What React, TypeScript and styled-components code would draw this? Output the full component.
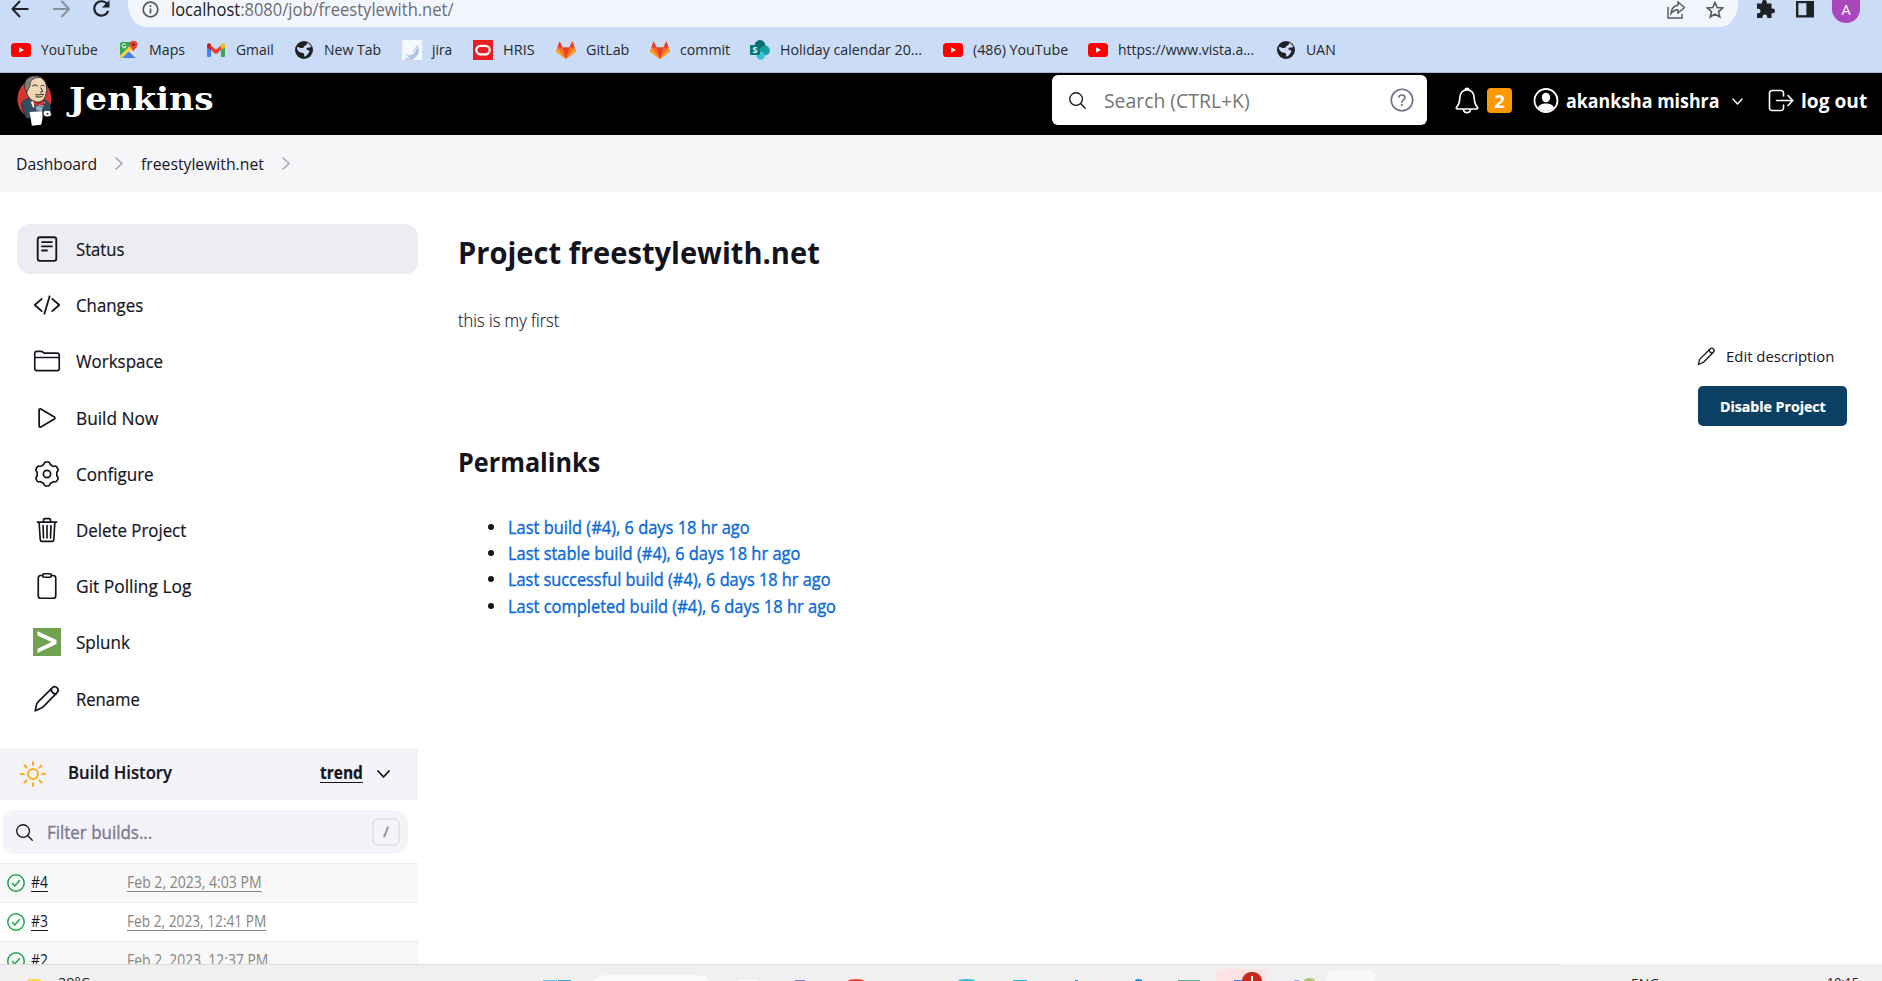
import React, { useLayoutEffect, useRef, useState } from 'react';
import styled, { createGlobalStyle } from 'styled-components';

const Global = createGlobalStyle`
  * { box-sizing: border-box; }
  html, body { margin: 0; padding: 0; overflow: hidden; }
  body { font-family: "Open Sans", "Noto Sans", sans-serif; color: #14141f; background: #fff; }
  svg { display: block; flex: none; }
  h1, h2, p, ul { margin: 0; padding: 0; }
`;

/* Text condensed or widened to fill a known width */
const FitBox = styled.span<{ $w: number }>`
  display: block; flex: none; width: ${p => p.$w}px; white-space: nowrap; line-height: inherit;
`;
const FitInner = styled.span<{ $u?: boolean }>`
  display: inline-block; transform-origin: 0 50%; white-space: pre; vertical-align: top;
  ${p => p.$u && 'text-decoration: underline 1px; text-underline-offset: 3px; text-decoration-skip-ink: auto;'}
`;
function Fit({ w, u, children }: { w: number; u?: boolean; children: React.ReactNode }) {
  const ref = useRef<HTMLSpanElement>(null);
  const [k, setK] = useState(1);
  useLayoutEffect(() => {
    if (ref.current) setK(w / ref.current.offsetWidth);
  }, [w]);
  return (
    <FitBox $w={w}><FitInner ref={ref} $u={u} style={{ transform: `scaleX(${k})` }}>{children}</FitInner></FitBox>
  );
}

/* ---------- layout ---------- */
const Page = styled.div`
  width: 1882px; height: 981px; display: flex; flex-direction: column; overflow: hidden; background: #fff;
`;
const Chrome = styled.div`
  flex: none; height: 73px; background: #cbdcf7; border-bottom: 1px solid #a9b8d3;
`;
const NavRow = styled.div`
  height: 27px; display: flex; align-items: flex-start; padding-left: 10px;
`;
const NavIcon = styled.div<{ $w: number; $mt?: number }>`
  width: ${p => p.$w}px; flex: none; margin-top: ${p => p.$mt ?? 0}px;
`;
const Address = styled.div`
  width: 1610px; height: 27px; background: #f3f7fd; border-radius: 0 0 18px 18px / 0 0 24px 24px;
  display: flex; align-items: flex-start; padding-left: 14px; font-size: 17.5px; line-height: 18px; color: #6a6e73;
  b { font-weight: 400; color: #202124; }
`;
const AddressText = styled.div`margin-left: 12px; width: 1495px; flex: none;`;
const Avatar = styled.div`
  width: 28px; height: 23px; border-radius: 0 0 14px 14px; background: #ab47bc; color: #fff;
  font-size: 14.5px; line-height: 19px; text-align: center;
`;
const Bookmarks = styled.div`
  height: 45px; padding: 0 0 0 11px; display: flex; align-items: center; font-size: 15px; color: #25282d;
`;
const Bookmark = styled.div<{ $w: number }>`
  width: ${p => p.$w}px; flex: none; display: flex; align-items: center; gap: 9.5px; line-height: 20px;
  & > span { padding-bottom: 2px; }
`;
const Header = styled.header`
  flex: none; height: 62px; background: #000; display: flex; align-items: flex-start; color: #fff;
  padding-left: 16px; font-weight: 700; font-size: 20px;
`;
const Brand = styled.div`
  width: 1036px; flex: none; display: flex; align-items: flex-start; gap: 16px; padding-top: 2px;
  font-family: "DejaVu Serif", "Liberation Serif", serif; font-size: 32.5px; line-height: 48px;
`;
const Search = styled.div`
  width: 375px; height: 50px; margin-top: 2px; background: #fff; border-radius: 6px; display: flex; align-items: center;
  padding: 0 13px 0 17px; color: #757575; font-weight: 400; font-size: 19.5px;
`;
const SearchText = styled.div`width: 284px; margin-left: 18px; flex: none;`;
const HeaderTools = styled.div`
  height: 56px; padding-left: 28px; display: flex; align-items: center; line-height: 28px;
`;
const Badge = styled.div`
  width: 25px; height: 25px; background: #ff9800; border-radius: 4px; text-align: center; line-height: 25px;
  margin: 0 21px 2px 8px; font-size: 18.5px;
`;
const Gap = styled.div<{ $w: number }>`width: ${p => p.$w}px; flex: none;`;
const Crumbs = styled.nav`
  flex: none; height: 57px; background: #f6f6f9; display: flex; align-items: center; padding-left: 16px;
  font-size: 16.5px; gap: 18px; color: #14141f;
`;
const Body = styled.div`flex: 1; min-height: 0; display: flex; overflow: hidden;`;
const Side = styled.aside`width: 418px; flex: none;`;
const Tasks = styled.div`
  padding: 32px 0 0 17px; display: flex; flex-direction: column; gap: 6.2px; height: 556px;
`;
const Task = styled.div<{ $active?: boolean }>`
  height: 50px; flex: none; border-radius: 13px; display: flex; align-items: center; padding-left: 16px; gap: 15px;
  background: ${p => (p.$active ? '#ecedf3' : 'transparent')}; font-size: 17.7px; -webkit-text-stroke: 0.2px;
`;
const HistoryHead = styled.div`
  height: 52px; background: #f3f3f8; display: flex; align-items: center; padding: 0 28px 4px 20px;
  font-weight: 600; font-size: 18px; -webkit-text-stroke: 0.2px;
`;
const SunSlot = styled.div`margin: 4px 22px 0 0;`;
const Trend = styled.div`margin: 0 14px 0 auto; font-weight: 700;`;
const ChevronSlot = styled.div`margin-top: 3px;`;
const Filter = styled.div`
  width: 405px; height: 44px; margin: 10px 0 9px 3px; background: #f3f3f8; border-radius: 13px;
  display: flex; align-items: center; padding: 0 8px 0 13px; color: #7b7994; font-size: 17.5px; gap: 14px;
  -webkit-text-stroke: 0.35px;
`;
const KeyBox = styled.div`
  width: 28px; height: 28px; margin-left: auto; border: 2px solid #e3e2ee; border-radius: 6px; text-align: center;
  font-size: 15px; line-height: 23px;
`;
const Build = styled.div<{ $odd?: boolean }>`
  height: 39px; border-top: 1px solid #eeeeef; background: ${p => (p.$odd ? '#f8f8f8' : '#fff')};
  display: flex; align-items: center; padding: 0 0 3px 7px; font-size: 15.5px;
`;
const BuildNo = styled.div`width: 96px; margin-left: 6px;`;
const BuildDate = styled.div`color: #858585;`;
const CheckSlot = styled.div`margin-top: 3px;`;
const Main = styled.main`flex: 1; padding: 40px 35px 0 40px;`;
const Title = styled.h1`font-size: 31px; line-height: 40px; font-weight: 700;`;
const Desc = styled.p`margin-top: 36px; font-size: 17.7px; line-height: 24px; font-weight: 300; -webkit-text-stroke: 0.15px;`;
const Actions = styled.div`
  margin-top: 11px; height: 83px; display: flex; flex-direction: column; align-items: flex-end;
`;
const Edit = styled.div`
  width: 150px; height: 26px; display: flex; align-items: center; gap: 10px; font-size: 15.2px; margin-bottom: 17px;
`;
const Button = styled.button`
  width: 149px; height: 40px; border: 0; border-radius: 5px; background: #0b4063; color: #fff; padding: 0 0 0 22px;
  font: 700 14.8px "Open Sans", "Noto Sans", sans-serif; text-align: left; -webkit-text-stroke: 0.2px;
`;
const SubTitle = styled.h2`margin-top: 16px; font-size: 27.5px; line-height: 40px; font-weight: 700;`;
const Links = styled.ul`list-style: none; margin-top: 31.500px; padding-left: 30px;`;
const Link = styled.li`
  height: 26.4px; display: flex; align-items: center; gap: 14px; color: #0b6bd6; font-size: 17.5px; line-height: 24px;
  -webkit-text-stroke: 0.4px;
  &::before { content: ''; width: 6px; height: 6px; border-radius: 50%; background: #14141f; flex: none; }
`;
const Taskbar = styled.footer`
  flex: none; height: 17px; background: #f0f0f0; display: flex; align-items: flex-end; overflow: hidden;
  border-top: 1px solid; border-image: linear-gradient(90deg, #dcdcdc 1558px, #f0f0f0 1558px) 1;
`;
const Slice = styled.div<{ $ml: number; $w: number; $h: number; $c: string; $r?: string }>`
  flex: none; margin-left: ${p => p.$ml}px; width: ${p => p.$w}px; height: ${p => p.$h}px; background: ${p => p.$c};
  border-radius: ${p => p.$r ?? '0'};
`;
const BarText = styled.div<{ $ml: number; $peek: number }>`
  flex: none; margin-left: ${p => p.$ml}px; height: ${p => p.$peek}px; overflow: visible; font-size: 14.5px; line-height: 12px; color: #222;
`;
const AlertTile = styled.div`
  flex: none; margin-left: 16px; width: 51px; height: 12px; background: #fde3e3; border-radius: 6px 6px 0 0;
  display: flex; align-items: flex-end; padding-left: 18px;
`;
const AlertDot = styled.div`
  width: 20px; height: 9px; border-radius: 10px 10px 0 0; background: #c42b1c; display: flex; justify-content: center; align-items: flex-end;
  &::after { content: ''; width: 2px; height: 5px; background: #fff; }
`;

/* ---------- icons ---------- */
type IconProps = { s: number; sw?: number; c?: string; children: React.ReactNode };
const Line = ({ s, sw = 32, c = 'currentColor', children }: IconProps) => (
  <svg width={s} height={s} viewBox="0 0 512 512" fill="none" stroke={c} strokeWidth={sw} strokeLinecap="round" strokeLinejoin="round">{children}</svg>
);
const Chevron = ({ w, h, c, sw = 1.6 }: { w: number; h: number; c: string; sw?: number }) => (
  <svg width={w} height={h} viewBox={`0 0 ${w} ${h}`} fill="none" stroke={c} strokeWidth={sw} strokeLinecap="round" strokeLinejoin="round">
    {w > h ? <path d={`M1 1L${w / 2} ${h - 1}L${w - 1} 1`} /> : <path d={`M1 1L${w - 1} ${h / 2}L1 ${h - 1}`} />}
  </svg>
);
const Magnifier = ({ s, sw }: { s: number; sw?: number }) => (
  <svg width={s} height={s} viewBox="46 46 420 420" fill="none" stroke="#14141f" strokeWidth={sw ?? 34} strokeLinecap="round">
    <circle cx="221" cy="221" r="157" /><path d="M338 338L448 448" />
  </svg>
);
const gearPath = (() => {
  const pts: string[] = [];
  for (let i = 0; i < 120; i++) {
    const a = (i / 120) * Math.PI * 2;
    const r = 200 + 20 * Math.tanh(2.4 * Math.cos(6 * a));
    pts.push(`${(256 + r * Math.sin(a)).toFixed(1)} ${(256 - r * Math.cos(a)).toFixed(1)}`);
  }
  return `M${pts.join('L')}Z`;
})();
const Pencil = ({ s, sw = 32 }: { s: number; sw?: number }) => (
  <Line s={s} sw={sw}>
    <path d="M40 472l24-112c4-18 12-32 26-46L352 52c30-30 66-26 90 0s26 60-2 88L190 396c-14 14-28 22-46 28z" />
    <path d="M324 80c16 48 44 78 92 92" />
  </Line>
);
const icons: Record<string, React.ReactNode> = {
  Status: <Line s={28} sw={34}><rect x="86" y="42" width="340" height="430" rx="42" /><path d="M166 130h180M166 208h180M166 284h90" /></Line>,
  Changes: <Line s={28} sw={33}><path d="M160 368L32 256l128-112M352 368l128-112-128-112M304 96l-96 320" /></Line>,
  Workspace: <Line s={28} sw={30}><path d="M440 432H72a40 40 0 01-40-40V120a40 40 0 0140-40h75.89a40 40 0 0122.19 6.72l27.84 18.56a40 40 0 0022.19 6.72H440a40 40 0 0140 40v240a40 40 0 01-40 40zM32 192h448" /></Line>,
  'Build Now': <Line s={28} sw={32}><path d="M112 111v290c0 17.44 17 28.52 31 20.16l247.9-148.37c12.12-7.25 12.12-26.33 0-33.58L143 90.84c-14-8.36-31 2.72-31 20.16z" /></Line>,
  Configure: <Line s={28} sw={31}><path d={gearPath} /><circle cx="256" cy="256" r="66" /></Line>,
  'Delete Project': <Line s={28} sw={30}><path d="M112 112l20 320c.95 18.49 14.4 32 32 32h184c17.67 0 30.87-13.51 32-32l20-320M80 112h352M192 112V72a24 24 0 0124-24h80a24 24 0 0124 24v40M256 176v224M184 176l8 224M328 176l-8 224" /></Line>,
  'Git Polling Log': <Line s={28} sw={31}><path d="M336 64h32a48 48 0 0148 48v320a48 48 0 01-48 48H144a48 48 0 01-48-48V112a48 48 0 0148-48h32" /><rect x="176" y="32" width="160" height="64" rx="26" /></Line>,
  Splunk: <svg width="28" height="28" viewBox="0 0 28 28"><rect width="28" height="28" fill="#70a24f" /><path d="M4.5 3.2L23.5 12v4L4.5 25v-4.300L18.500 14 4.500 7.500z" fill="#fff" /></svg>,
  Rename: <Pencil s={28} sw={31} />,
};
const YouTube = () => <svg width="20" height="20" viewBox="0 0 20 20"><rect y="3" width="20" height="14" rx="3.600" fill="#f00" /><path d="M8 7.200v5.600l5-2.800z" fill="#fff" /></svg>;
const Globe = () => (
  <svg width="20" height="20" viewBox="0 0 20 20"><circle cx="10" cy="10" r="9" fill="#202124" />
    <path d="M3 7c2 .3 3.500 1.200 5.500 1 2-.2 1-2 3-2.400 1.500-.3 1-2 2-2.600 2 1 3 2 3.800 4-1.800 1-3.800-.2-4.800 1.400-.8 1.600 1.500 1.200 2.500 2 1 1-.5 3-1.500 4-1 1-1.500 1.500-3 2.400-1-1 .5-2.500-1-3.500-1.500-.8-4-.5-5-2C3.600 10.500 2.800 9 3 7z" fill="#cbdcf7" /></svg>
);
const Fox = () => (
  <svg width="20" height="20" viewBox="0 0 20 20">
    <path d="M3.600 1.200L.3 10.500a1.500 1.500 0 00.5 1.800L10 19l9.200-6.700a1.500 1.500 0 00.5-1.800L16.400 1.200 13.300 7.500H6.700z" fill="#fc6d26" />
    <path d="M10 19L6.500 7.500h7z" fill="#e24329" /><path d="M3.600 1.200L6.700 7.500H1.400zM16.400 1.200l-3.100 6.300h5.300z" fill="#e24329" />
    <path d="M1.400 8L.3 10.500a1.500 1.500 0 00.5 1.800L10 19zM18.600 8l1.100 2.500a1.500 1.500 0 01-.5 1.800L10 19z" fill="#fca326" />
  </svg>
);
const Maps = () => (
  <svg width="20" height="20" viewBox="0 0 20 20"><rect x="1" y="2" width="16" height="16" rx="2" fill="#34a853" />
    <path d="M1.500 17.500L17 3v13a2 2 0 01-2 2H3z" fill="#dfe3e6" /><path d="M1 15.500L14.500 2.600 17 5 3.500 18H3a2 2 0 01-2-2z" fill="#fbd13c" />
    <path d="M3 18l7-6.500 6.500 6.500z" fill="#4285f4" />
    <path d="M14.300 12c-.4-2.800-3.700-4-3.700-7.300a3.900 3.900 0 017.800 0c0 3.300-3.700 4.500-4.100 7.300z" fill="#ea4335" /><circle cx="14.500" cy="4.500" r="1.500" fill="#8c2018" />
    <path d="M6.800 4.700A2 2 0 107 6.500H5.300" stroke="#fff" fill="none" /></svg>
);
const Gmail = () => (
  <svg width="20" height="20" viewBox="0 0 20 20"><path d="M1 5h4v12H2.300A1.300 1.300 0 011 15.700z" fill="#4285f4" /><path d="M15 5h4v10.700a1.300 1.300 0 01-1.300 1.300H15z" fill="#34a853" />
    <path d="M5 5.500l5 4 5-4v4.800l-5 3.900-5-3.900z" fill="#ea4335" /><path d="M1 5.200C1 3.200 3 2.600 4.400 3.700L5 4.200v6.100L1 7.300z" fill="#c5221f" /><path d="M19 5.200c0-2-2-2.600-3.400-1.500l-.6.5v6.100l4-3z" fill="#fbbc04" /></svg>
);
const Jira = () => (
  <svg width="20" height="20" viewBox="0 0 20 20"><rect width="20" height="20" fill="#f3f9fe" />
    <path d="M3 13c3 3 7 3 10-1l3-7c2 5 1 10-3 13-4 1-8-1-10-5z" fill="#bcd8f0" /><path d="M6 16c5 1 8-2 9-7M8 18c5 0 7-3 8-8M11 12l4-6" stroke="#86add9" strokeWidth=".8" fill="none" /><path d="M3 19h9" stroke="#b795d8" /></svg>
);
const Hris = () => <svg width="20" height="20" viewBox="0 0 20 20"><rect width="20" height="20" fill="#ed1c24" /><rect x="3.300" y="5.800" width="13.400" height="8.600" rx="4.300" fill="none" stroke="#fff" strokeWidth="2.200" /></svg>;
const SharePoint = () => (
  <svg width="20" height="20" viewBox="0 0 20 20"><circle cx="10" cy="5.500" r="5.400" fill="#036c70" /><circle cx="14.800" cy="10.500" r="5" fill="#1a9ba1" /><circle cx="10.600" cy="15.800" r="4" fill="#37c6d0" />
    <rect y="5" width="10" height="10" rx="1" fill="#03787c" /><text x="5" y="13" fontSize="9" fontWeight="700" textAnchor="middle" fill="#fff" fontFamily="Open Sans, sans-serif">S</text></svg>
);
const Butler = () => (
  <svg width="37" height="51" viewBox="50 43 110 153">
    <ellipse cx="105" cy="115" rx="51" ry="58" fill="#d33833" />
    <path d="M66 126c8-8 14-10 22-13l50 6c12 6 17 18 15 32l-10 16-62 6c-8-16-14-32-15-47z" fill="#335061" stroke="#14222b" strokeWidth="2" />
    <path d="M78 84c-6-20 2-34 22-37 22-3 40 10 41 32 1 20-4 42-22 45-22 2-36-14-41-40z" fill="#f0d6b7" stroke="#2a2420" strokeWidth="2.500" />
    <path d="M76 84c-3-20 4-34 26-38 10-1 18 1 24 4-12 0-26 2-32 12-3 6 0 14-6 20-2 6-4 6-5 12z" fill="#817e78" stroke="#25211f" strokeWidth="2" />
    <path d="M99 76c5-5 11-4 15 0M124 76c4-3 7-3 10 0M124 82l6 10-7 3M108 102c8 4 18-4 24-1M110 108c8 3 15 1 19-2" fill="none" stroke="#2a2420" strokeWidth="3" strokeLinecap="round" />
    <path d="M94 124l10-4 12 12 14-12 6 4-6 18-30-2z" fill="#fff" />
    <path d="M103 120l14 8 15-9 2 16-15-5-14 8z" fill="#d33833" stroke="#7c1512" strokeWidth="2" />
    <path d="M106 138l14-4 12 6-5 14-17-4z" fill="#8fb0c4" stroke="#14222b" strokeWidth="2" />
    <path d="M90 154l38-2 1 22-4 18-28 3-3-20z" fill="#fff" />
    <path d="M131 153c8-6 16-4 22-2l3 14-14 4-10-5z" fill="#fff" stroke="#1b2b35" strokeWidth="2.500" /><circle cx="144" cy="159" r="3" fill="#1b2b35" />
  </svg>
);
const Sun = () => (
  <svg width="26" height="26" viewBox="0 0 26 26" fill="none" stroke="#fea81a" strokeWidth="2" strokeLinecap="round">
    <circle cx="13" cy="13" r="5" />
    {[0, 45, 90, 135, 180, 225, 270, 315].map(a => <path key={a} d="M13 1v2.800" transform={`rotate(${a} 13 13)`} />)}
  </svg>
);
const Check = () => (
  <svg width="18" height="18" viewBox="0 0 18 18" fill="none" stroke="#1ea64b" strokeWidth="1.500" strokeLinecap="round" strokeLinejoin="round">
    <circle cx="9" cy="9" r="8.200" /><path d="M5.500 9.500l2.300 2.500 4.700-5.500" /></svg>
);

/* ---------- data ---------- */
const bookmarks: [React.ReactNode, string, number, number][] = [
  [<YouTube />, 'YouTube', 57, 108], [<Maps />, 'Maps', 36, 87], [<Gmail />, 'Gmail', 38, 88], [<Globe />, 'New Tab', 57, 108],
  [<Jira />, 'jira', 20, 71], [<Hris />, 'HRIS', 32, 83], [<Fox />, 'GitLab', 43, 94], [<Fox />, 'commit', 50, 100],
  [<SharePoint />, 'Holiday calendar 20...', 142, 193], [<YouTube />, '(486) YouTube', 95, 145],
  [<YouTube />, 'https://www.vista.a...', 136, 188], [<Globe />, 'UAN', 30, 80],
];
const tasks: [string, number][] = [
  ['Status', 48], ['Changes', 67.5], ['Workspace', 87], ['Build Now', 82], ['Configure', 78],
  ['Delete Project', 110.5], ['Git Polling Log', 115], ['Splunk', 54], ['Rename', 64],
];
const builds: [string, string, number][] = [
  ['#4', 'Feb 2, 2023, 4:03 PM', 135], ['#3', 'Feb 2, 2023, 12:41 PM', 139], ['#2', 'Feb 2, 2023, 12:37 PM', 141],
];
const links: [string, number][] = [
  ['Last build (#4), 6 days 18 hr ago', 242], ['Last stable build (#4), 6 days 18 hr ago', 292],
  ['Last successful build (#4), 6 days 18 hr ago', 323], ['Last completed build (#4), 6 days 18 hr ago', 328],
];

export default function App() {
  return (
    <Page>
      <Global />
      <Chrome>
        <NavRow>
          <NavIcon $w={42}><svg width="20" height="18" viewBox="0 0 20 18" fill="none" stroke="#202124" strokeWidth="2"><path d="M18.500 9H3M10 1L2.500 9l7.500 8" /></svg></NavIcon>
          <NavIcon $w={40}><svg width="20" height="18" viewBox="0 0 20 18" fill="none" stroke="#8b919b" strokeWidth="2"><path d="M1 9h15.500M9.500 1L17 9l-7.500 8" /></svg></NavIcon>
          <NavIcon $w={36}><svg width="19" height="18" viewBox="0 0 19 18"><path d="M15.500 4.500A7.200 7.200 0 1016.200 11" fill="none" stroke="#202124" strokeWidth="2.200" /><path d="M17.500 0v7.500H10z" fill="#202124" /></svg></NavIcon>
          <Address>
            <NavIcon $w={17} $mt={1}><svg width="17" height="17" viewBox="0 0 17 17" fill="none" stroke="#54585d" strokeWidth="1.700"><circle cx="8.500" cy="8.500" r="7.300" /><path d="M8.500 7.500v5M8.500 4.200v1.900" /></svg></NavIcon>
            <AddressText><Fit w={282}><b>localhost</b>:8080/job/freestylewith.net/</Fit></AddressText>
            <NavIcon $w={40}><svg width="20" height="19" viewBox="0 0 20 19" fill="none" stroke="#54585d" strokeWidth="1.400"><path d="M2 7v11h14v-4M12 2l6.500 5.500L12 13V9.700c-3 0-5 1-7 3.800.5-5 3-8 7-8.300z" /></svg></NavIcon>
            <NavIcon $w={20} $mt={1}><svg width="18" height="18" viewBox="0 0 18 18" fill="none" stroke="#54585d" strokeWidth="1.600"><path d="M9 1.500l2.200 5 5.500.5-4.200 3.600 1.300 5.400L9 13.100 4.200 16l1.300-5.400L1.300 7l5.500-.5z" /></svg></NavIcon>
          </Address>
          <Gap $w={18} />
          <NavIcon $w={40}><svg width="20" height="18" viewBox="0 0 20 18"><path d="M1 3.500h5V2.300a2.400 2.400 0 014.800 0v1.200h4.700v5h1.100a2.400 2.400 0 010 4.800h-1.100V18h-4.300v-1.200a2.300 2.300 0 00-4.600 0V18H1v-4.700h1.200a2.300 2.300 0 000-4.600H1z" fill="#202124" /></svg></NavIcon>
          <NavIcon $w={36}><svg width="18" height="18" viewBox="0 0 18 18"><path d="M0 1h18v16.500H0z" fill="#202124" /><path d="M2.400 3.200h8v12h-8z" fill="#cbdcf7" /></svg></NavIcon>
          <Avatar>A</Avatar>
        </NavRow>
        <Bookmarks>
          {bookmarks.map(([icon, text, w, total], i) => <Bookmark key={i} $w={total}>{icon}<Fit w={w}>{text}</Fit></Bookmark>)}
        </Bookmarks>
      </Chrome>

      <Header>
        <Brand><Butler /><Fit w={144}>Jenkins</Fit></Brand>
        <Search>
          <Magnifier s={17} sw={32} />
          <SearchText><Fit w={146}>Search (CTRL+K)</Fit></SearchText>
          <Line s={28} sw={30} c="#73718c">
            <circle cx="256" cy="256" r="196" />
            <path d="M200 202c2-20 22-38 56-38 32 0 54 18 56 42 1 20-9 31-27 43s-31 26-31 47" /><circle cx="254" cy="346" r="6" />
          </Line>
        </Search>
        <HeaderTools>
          <svg width="24" height="28" viewBox="0 0 24 28" fill="none" stroke="#fff" strokeWidth="1.700" strokeLinejoin="round"><path d="M12 3c-5 0-7 4-7.200 8-.2 5-.8 6.500-3.200 9.200-.7.900-.2 1.800.9 1.800h19c1.100 0 1.600-.9.900-1.800-2.400-2.700-3-4.200-3.200-9.200C19 7 17 3 12 3zM10 2.800c.3-2 3.700-2 4 0M8.500 22c0 4.800 7 4.800 7 0" /></svg>
          <Badge>2</Badge>
          <svg width="26" height="26" viewBox="0 0 26 26"><circle cx="13" cy="12.500" r="11.500" fill="none" stroke="#fff" strokeWidth="1.800" /><ellipse cx="13" cy="9.500" rx="4.200" ry="4.800" fill="#fff" /><path d="M5 19.500c2-5.500 14-5.500 16 0-4 4.500-12 4.500-16 0z" fill="#fff" /></svg>
          <Gap $w={7} /><Fit w={153}>akanksha mishra</Fit>
          <Gap $w={13} /><Chevron w={11} h={7} c="#fff" sw={1.4} />
          <Gap $w={25} />
          <svg width="26" height="24" viewBox="0 0 26 24" fill="none" stroke="#fff" strokeWidth="1.600" strokeLinecap="round" strokeLinejoin="round"><path d="M15.500 7V4a2.500 2.500 0 00-2.500-2.500H4A2.500 2.500 0 001.500 4v15A2.500 2.500 0 004 21.500h9a2.500 2.500 0 002.500-2.500v-3M8.500 11.500h16M20 6.500l4.800 5-4.800 5" /></svg>
          <Gap $w={7} /><Fit w={66}>log out</Fit>
        </HeaderTools>
      </Header>

      <Crumbs>
        <Fit w={81}>Dashboard</Fit><Chevron w={8} h={13} c="#a5a3b8" />
        <Fit w={123}>freestylewith.net</Fit><Chevron w={8} h={13} c="#a5a3b8" />
      </Crumbs>

      <Body>
        <Side>
          <Tasks>
            {tasks.map(([t, w], i) => <Task key={t} $active={i === 0}>{icons[t]}<Fit w={w}>{t}</Fit></Task>)}
          </Tasks>
          <HistoryHead>
            <SunSlot><Sun /></SunSlot><Fit w={104}>Build History</Fit>
            <Trend><Fit w={43} u>trend</Fit></Trend><ChevronSlot><Chevron w={13} h={8} c="#14141f" sw={1.8} /></ChevronSlot>
          </HistoryHead>
          <Filter><Magnifier s={17} sw={32} /><Fit w={105.5}>Filter builds...</Fit><KeyBox>/</KeyBox></Filter>
          {builds.map(([n, d, w], i) => (
            <Build key={n} $odd={i % 2 === 0}>
              <CheckSlot><Check /></CheckSlot>
              <BuildNo><Fit w={17} u>{n}</Fit></BuildNo>
              <BuildDate><Fit w={w} u>{d}</Fit></BuildDate>
            </Build>
          ))}
        </Side>
        <Main>
          <Title><Fit w={362}>Project freestylewith.net</Fit></Title>
          <Desc><Fit w={101.5}>this is my first</Fit></Desc>
          <Actions>
            <Edit><Pencil s={19} sw={36} /><Fit w={108}>Edit description</Fit></Edit>
            <Button><Fit w={106}>Disable Project</Fit></Button>
          </Actions>
          <SubTitle><Fit w={142}>Permalinks</Fit></SubTitle>
          <Links>{links.map(([t, w]) => <Link key={t}><Fit w={w}>{t}</Fit></Link>)}</Links>
        </Main>
      </Body>

      <Taskbar>
        <Slice $ml={27} $w={14} $h={2} $c="#fdd835" $r="7px 7px 0 0 / 2px 2px 0 0" />
        <BarText $ml={17} $peek={4}><Fit w={32}>29°C</Fit></BarText>
        <Slice $ml={453} $w={14} $h={1} $c="#6cc9f2" />
        <Slice $ml={1} $w={13} $h={1} $c="#3fa4e4" />
        <Slice $ml={23} $w={115} $h={6} $c="#fbfbfb" $r="14px 14px 0 0 / 6px 6px 0 0" />
        <Slice $ml={29} $w={20} $h={1} $c="#fafafa" />
        <Slice $ml={37} $w={10} $h={1} $c="#8a7fce" />
        <Slice $ml={43} $w={16} $h={2} $c="#ea4335" $r="8px 8px 0 0 / 2px 2px 0 0" />
        <Slice $ml={94} $w={17} $h={2} $c="#2bc4d0" $r="8px 8px 0 0 / 2px 2px 0 0" />
        <Slice $ml={38} $w={14} $h={1} $c="#22b8f0" />
        <Slice $ml={48} $w={3} $h={1} $c="#2a86d8" />
        <Slice $ml={57} $w={7} $h={2} $c="#1c8fdc" $r="4px 4px 0 0 / 2px 2px 0 0" />
        <Slice $ml={36} $w={22} $h={1} $c="#5cb896" />
        <AlertTile><Slice $ml={0} $w={8} $h={1} $c="#3c8ed0" /><AlertDot /></AlertTile>
        <Slice $ml={27} $w={5} $h={1} $c="#a9a3ec" />
        <Slice $ml={5} $w={11} $h={3} $c="#b1c777" $r="6px 6px 0 0 / 3px 3px 0 0" />
        <Slice $ml={12} $w={48} $h={11} $c="#f8f8f8" $r="6px 6px 0 0" />
        <BarText $ml={256} $peek={3}><Fit w={29}>ENG</Fit></BarText>
        <BarText $ml={167} $peek={4}><Fit w={32}>10:15</Fit></BarText>
      </Taskbar>
    </Page>
  );
}
